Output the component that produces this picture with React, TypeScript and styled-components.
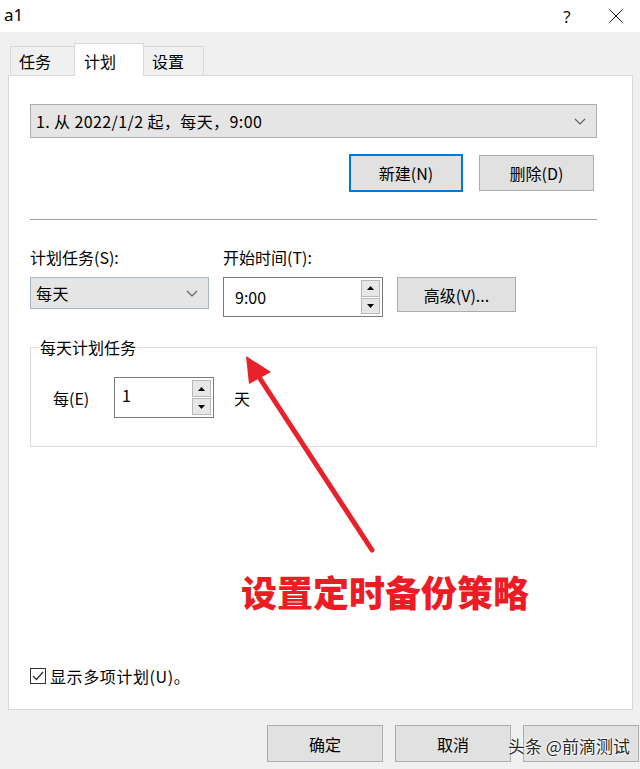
import React from "react";
import styled, { createGlobalStyle } from "styled-components";

const GlobalStyle = createGlobalStyle`
  html, body { margin: 0; padding: 0; }
  body {
    width: 640px;
    height: 769px;
    overflow: hidden;
    background: #f0f0f0;
    font-family: "Noto Sans CJK SC", "Noto Sans", sans-serif;
    color: #000;
  }
  * { box-sizing: border-box; }
`;

const Window = styled.div`
  position: relative;
  width: 640px;
  height: 769px;
  background: #f0f0f0;
  display: flex;
  flex-direction: column;
  overflow: hidden;
  font-size: 16px;
`;

const TitleBar = styled.div`
  height: 32px;
  background: #fff;
  display: flex;
  align-items: center;
  padding-left: 4px;
  flex-shrink: 0;
`;

const TitleText = styled.span`
  font-family: "Noto Sans", "Open Sans", sans-serif;
  font-size: 17px;
  line-height: 20px;
  margin-top: -2px;
`;

const TitleControls = styled.div`
  margin-left: auto;
  display: flex;
  height: 100%;
`;

const CaptionButton = styled.div<{ $w: number }>`
  width: ${(p) => p.$w}px;
  height: 100%;
  display: flex;
  align-items: center;
  justify-content: center;
  font-family: "Noto Sans", sans-serif;
  font-size: 17px;
  color: #111;
`;

const Body = styled.div`
  flex: 1;
  display: flex;
  flex-direction: column;
  padding: 12px 7px 0 8px;
  min-height: 0;
`;

const TabStrip = styled.div`
  display: flex;
  align-items: flex-end;
  height: 32px;
  padding-left: 2px;
  position: relative;
  z-index: 1;
  margin-bottom: -1px;
`;

const Tab = styled.div<{ $active?: boolean; $w: number }>`
  width: ${(p) => p.$w}px;
  height: ${(p) => (p.$active ? 33 : 30)}px;
  margin: ${(p) => (p.$active ? "0 -1px" : "0")};
  background: ${(p) => (p.$active ? "#fff" : "#f0f0f0")};
  border: 1px solid #d9d9d9;
  border-bottom: ${(p) => (p.$active ? "none" : "1px solid #d9d9d9")};
  display: flex;
  align-items: ${(p) => (p.$active ? "flex-start" : "center")};
  padding: ${(p) => (p.$active ? "5px 0 0 9px" : "0 0 0 8px")};
  font-size: 16px;
  position: relative;
  z-index: ${(p) => (p.$active ? 2 : 1)};
`;

const Panel = styled.div`
  height: 635px;
  background: #fff;
  border: 1px solid #d9d9d9;
  display: flex;
  flex-direction: column;
  padding: 0 35px 23px 21px;
`;

const Combo = styled.div<{ $w?: number; $h: number; $border: string }>`
  width: ${(p) => (p.$w ? `${p.$w}px` : "100%")};
  height: ${(p) => p.$h}px;
  background: #e5e5e5;
  border: 1px solid ${(p) => p.$border};
  display: flex;
  align-items: center;
  padding: 0 10px 0 5px;
  white-space: nowrap;
`;

const ComboText = styled.span`
  flex: 1;
  letter-spacing: 0.4px;
`;

const ScheduleRow = styled.div`
  margin-top: 28px;
`;

const ButtonRow = styled.div`
  margin-top: 16px;
  display: flex;
  justify-content: flex-end;
  align-items: center;
  gap: 16px;
  padding-right: 3px;
  height: 38px;
`;

const PushButton = styled.div<{ $w: number; $h: number; $default?: boolean }>`
  width: ${(p) => p.$w}px;
  height: ${(p) => p.$h}px;
  background: #e1e1e1;
  border: ${(p) => (p.$default ? "2px solid #0078d7" : "1px solid #adadad")};
  display: flex;
  align-items: center;
  justify-content: center;
  color: #000;
  flex-shrink: 0;
`;

const Separator = styled.div`
  margin-top: 27px;
  height: 1px;
  background: #a0a0a0;
`;

const FieldGrid = styled.div`
  margin-top: 27px;
  display: grid;
  grid-template-columns: 179px 160px 119px;
  grid-template-rows: 20px auto;
  column-gap: 14px;
  row-gap: 10px;
  align-items: start;
`;

const FieldLabel = styled.div`
  line-height: 20px;
`;

const SpinBox = styled.div<{ $w: number; $h: number }>`
  width: ${(p) => p.$w}px;
  height: ${(p) => p.$h}px;
  background: #fff;
  border: 1px solid #7a7a7a;
  display: flex;
  align-items: stretch;
  padding: 1px;
`;

const SpinValue = styled.div<{ $align: string; $pad: string }>`
  flex: 1;
  display: flex;
  align-items: ${(p) => p.$align};
  padding: ${(p) => p.$pad};
`;

const SpinColumn = styled.div`
  width: 21px;
  display: flex;
  flex-direction: column;
  gap: 1px;
  padding: 1px 1px;
`;

const SpinButton = styled.div`
  flex: 1;
  background: #e7e7e7;
  border: 1px solid #b9b9b9;
  display: flex;
  align-items: center;
  justify-content: center;
`;

const GroupBox = styled.fieldset`
  margin: 20px 0 0 0;
  padding: 20px 0 28px 22px;
  border: 1px solid #dcdcdc;
  min-width: 0;
`;

const GroupLegend = styled.legend`
  margin-left: -14px;
  padding: 0 1px;
  line-height: 20px;
`;

const GroupRow = styled.div`
  display: flex;
  align-items: center;
`;

const InlineLabel = styled.span<{ $w: number }>`
  width: ${(p) => p.$w}px;
  flex-shrink: 0;
`;

const UnitLabel = styled.span`
  margin-left: 20px;
`;

const CheckRow = styled.div`
  margin-top: auto;
  display: flex;
  align-items: center;
  gap: 4px;
  height: 20px;
  letter-spacing: 0.6px;
`;

const CheckBox = styled.div`
  width: 16px;
  height: 16px;
  border: 1px solid #333;
  background: #fff;
  display: flex;
  align-items: center;
  justify-content: center;
`;

const Footer = styled.div`
  margin-top: 15px;
  margin-right: -6px;
  display: flex;
  justify-content: flex-end;
  gap: 12px;
`;

const FooterButton = styled.div`
  position: relative;
  width: 116px;
  height: 37px;
  background: #e1e1e1;
  border: 1px solid #adadad;
  display: flex;
  align-items: center;
  justify-content: center;
`;

const Watermark = styled.span`
  position: absolute;
  left: -16px;
  top: 7px;
  white-space: nowrap;
  font-size: 17px;
  color: #2a2a2a;
  text-shadow: 0 0 2px #fff, 0 0 2px #fff, 0 0 3px #fff;
`;

const ArrowLayer = styled.svg`
  position: absolute;
  left: 0;
  top: 0;
  pointer-events: none;
`;

const Caption = styled.div`
  position: absolute;
  left: 241px;
  top: 571px;
  font-size: 36px;
  line-height: 40px;
  font-weight: 900;
  color: #ec1c24;
  white-space: nowrap;
`;

const Chevron = () => (
  <svg width="12" height="7" viewBox="0 0 12 7">
    <polyline points="1,1 6,6 11,1" fill="none" stroke="#606060" strokeWidth="1.2" />
  </svg>
);

const Up = () => (
  <svg width="7" height="4" viewBox="0 0 7 4">
    <polygon points="0,4 3.5,0 7,4" fill="#000" />
  </svg>
);

const Down = () => (
  <svg width="7" height="4" viewBox="0 0 7 4">
    <polygon points="0,0 7,0 3.5,4" fill="#000" />
  </svg>
);

export default function App() {
  return (
    <>
      <GlobalStyle />
      <Window>
        <TitleBar>
          <TitleText>a1</TitleText>
          <TitleControls>
            <CaptionButton $w={50}>?</CaptionButton>
            <CaptionButton $w={48}>
              <svg width="14" height="14" viewBox="0 0 14 14">
                <path d="M0.5 0.5 L13.5 13.5 M13.5 0.5 L0.5 13.5" stroke="#111" strokeWidth="1" />
              </svg>
            </CaptionButton>
          </TitleControls>
        </TitleBar>
        <Body>
          <TabStrip>
            <Tab $w={65}>任务</Tab>
            <Tab $w={70} $active>
              计划
            </Tab>
            <Tab $w={61}>设置</Tab>
          </TabStrip>
          <Panel>
            <ScheduleRow>
              <Combo $h={34} $border="#adadad">
                <ComboText>1. 从 2022/1/2 起，每天，9:00</ComboText>
                <Chevron />
              </Combo>
            </ScheduleRow>
            <ButtonRow>
              <PushButton $w={114} $h={38} $default>
                新建(N)
              </PushButton>
              <PushButton $w={115} $h={36}>
                删除(D)
              </PushButton>
            </ButtonRow>
            <Separator />
            <FieldGrid>
              <FieldLabel>计划任务(S):</FieldLabel>
              <FieldLabel>开始时间(T):</FieldLabel>
              <div />
              <Combo $w={179} $h={32} $border="#a6b6c6">
                <ComboText>每天</ComboText>
                <Chevron />
              </Combo>
              <SpinBox $w={160} $h={40}>
                <SpinValue $align="center" $pad="0 0 0 10px">
                  9:00
                </SpinValue>
                <SpinColumn>
                  <SpinButton>
                    <Up />
                  </SpinButton>
                  <SpinButton>
                    <Down />
                  </SpinButton>
                </SpinColumn>
              </SpinBox>
              <PushButton $w={119} $h={35}>
                高级(V)...
              </PushButton>
            </FieldGrid>
            <GroupBox>
              <GroupLegend>每天计划任务</GroupLegend>
              <GroupRow>
                <InlineLabel $w={61}>每(E)</InlineLabel>
                <SpinBox $w={100} $h={41}>
                  <SpinValue $align="flex-start" $pad="4px 0 0 6px">
                    1
                  </SpinValue>
                  <SpinColumn>
                    <SpinButton>
                      <Up />
                    </SpinButton>
                    <SpinButton>
                      <Down />
                    </SpinButton>
                  </SpinColumn>
                </SpinBox>
                <UnitLabel>天</UnitLabel>
              </GroupRow>
            </GroupBox>
            <CheckRow>
              <CheckBox>
                <svg width="12" height="10" viewBox="0 0 12 10">
                  <polyline points="1,5 4.5,8.5 11,1" fill="none" stroke="#333" strokeWidth="1.4" />
                </svg>
              </CheckBox>
              显示多项计划(U)。
            </CheckRow>
          </Panel>
          <Footer>
            <FooterButton>确定</FooterButton>
            <FooterButton>取消</FooterButton>
            <FooterButton>
              <Watermark>头条 @前滴测试</Watermark>
            </FooterButton>
          </Footer>
        </Body>
        <ArrowLayer width="640" height="769" viewBox="0 0 640 769">
          <line x1="372" y1="550" x2="257" y2="374" stroke="#e8212b" strokeWidth="5" strokeLinecap="round" />
          <polygon points="246,356 249,384 271,372" fill="#e8212b" />
        </ArrowLayer>
        <Caption>设置定时备份策略</Caption>
      </Window>
    </>
  );
}
